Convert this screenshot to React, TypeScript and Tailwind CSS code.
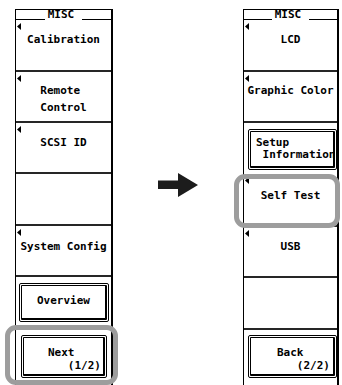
import { ReactNode } from "react";

const Tri = () => (
  <svg
    width="4"
    height="7"
    viewBox="0 0 4 7"
    className="absolute left-[1px] top-[3px]"
  >
    <polygon points="0,3.5 4,0 4,7" fill="black" />
  </svg>
);

type RowProps = {
  label?: string;
  arrow?: boolean;
  h: string;
  pt?: string;
};

const Row = ({ label, arrow, h, pt = "pt-[10px]" }: RowProps) => (
  <div
    className={`relative ${h} ${pt} shrink-0 border-b-2 border-[#262626] flex justify-center`}
  >
    {arrow && <Tri />}
    {label && <span className="whitespace-pre leading-[17px]">{label}</span>}
  </div>
);

const RaisedButton = ({
  children,
  className,
}: {
  children: ReactNode;
  className: string;
}) => (
  <div className={`shrink-0 border border-black p-[1px] rounded-[2px] ${className}`}>
    <div className="h-full border border-r-2 border-b-2 border-black rounded-[1px]">
      {children}
    </div>
  </div>
);

const Header = () => (
  <div className="h-[11px] shrink-0 border-t border-b border-black flex justify-center items-end">
    <span className="text-[11px] leading-[10px] -mb-[1px] pl-[3px] pr-[8px] bg-white">
      MISC
    </span>
  </div>
);

const Arrow = () => (
  <svg width="40" height="24" viewBox="0 0 40 24" className="mt-[164px]">
    <polygon
      points="0,7.5 20,7.5 20,0 40,12 20,24 20,16 0,16"
      fill="#1c1c1c"
    />
  </svg>
);

export default function App() {
  return (
    <div className="h-[385px] w-[342px] overflow-hidden bg-white text-black font-bold text-[11px] font-['DejaVu_Sans_Mono',monospace] flex pl-[15px] pt-[9px]">
      {/* page 1 */}
      <div className="w-[98px] h-[380px] border-l border-r-2 border-black flex flex-col">
        <Header />
        <Row label="Calibration" arrow h="h-[52px]" pt="pt-[11px]" />
        <Row label={"Remote \nControl"} arrow h="h-[51px]" />
        <Row label="SCSI ID" arrow h="h-[51px]" pt="pt-[11px]" />
        <Row h="h-[52px]" />
        <Row label="System Config" arrow h="h-[51px]" pt="pt-[12px]" />
        <div className="flex flex-col pt-[6px] pl-[3px] pr-[2px]">
          <RaisedButton className="h-[39px]">
            <div className="flex justify-center pt-[8px] leading-[13px]">
              Overview
            </div>
          </RaisedButton>
          <div className="relative mt-[13px] ml-[2px] mr-[2px]">
            <RaisedButton className="h-[43px]">
              <div className="whitespace-pre pl-[24px] pt-[8px] leading-[13px]">
                {"Next\n   (1/2)"}
              </div>
            </RaisedButton>
            <div className="absolute -left-[16px] -top-[10px] -right-[11px] -bottom-[7px] border-[5px] border-[#9d9d9d] rounded-[11px]" />
          </div>
        </div>
      </div>

      <div className="ml-[45px]">
        <Arrow />
      </div>

      {/* page 2 */}
      <div className="ml-[45px] w-[96px] h-[380px] border-l border-r-2 border-black flex flex-col">
        <Header />
        <Row label="LCD" arrow h="h-[52px]" pt="pt-[11px]" />
        <Row label="Graphic Color" arrow h="h-[51px]" />
        <div className="h-[51px] shrink-0 pt-[6px] pl-[4px] pr-[0px] pb-[4px] flex flex-col">
          <RaisedButton className="h-[41px]">
            <div className="whitespace-pre pl-[5px] pt-[5px] leading-[12px]">
              {"Setup\n Information"}
            </div>
          </RaisedButton>
        </div>
        <div className="relative">
          <Row label="Self Test" arrow h="h-[53px]" pt="pt-[13px]" />
          <div className="absolute -left-[10px] top-0 -right-[3px] -bottom-[1px] border-[5px] border-[#9d9d9d] rounded-[11px]" />
        </div>
        <Row label="USB" arrow h="h-[51px]" pt="pt-[11px]" />
        <Row h="h-[52px]" />
        <div className="flex flex-col pt-[5px] pl-[4px] pr-[0px]">
          <RaisedButton className="h-[43px]">
            <div className="whitespace-pre pl-[26px] pt-[8px] leading-[13px]">
              {"Back\n   (2/2)"}
            </div>
          </RaisedButton>
        </div>
      </div>
    </div>
  );
}
